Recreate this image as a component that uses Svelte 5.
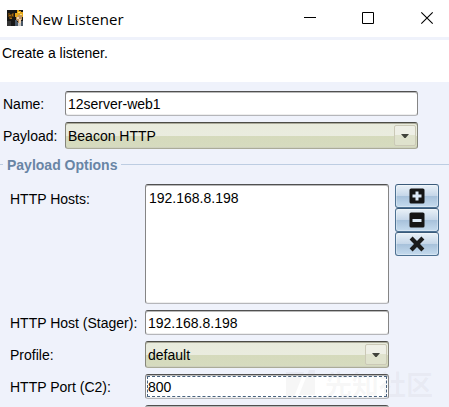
<script>
  let name = $state('12server-web1');
  let host = $state('192.168.8.198');
  let port = $state('800');
  const icons = ['plus', 'minus', 'cross'];
</script>

{#snippet combo(text)}
  <div class="combo">
    <span>{text}</span>
    <i><svg width="8" height="4" viewBox="0 0 8 4"><path d="M0 0H8L4.6 4H3.4Z" fill="#40423b" /></svg></i>
  </div>
{/snippet}

<div class="window">
  <header>
    <svg class="logo" width="16" height="16" viewBox="0 0 16 16" shape-rendering="crispEdges">
      <rect width="16" height="16" fill="#171716" />
      <path d="M1 3h2v1h2V3h2v4H5v2H2V7H1Z" fill="#5b3b0c" />
      <path d="M2 5h2v1H2zM5 4h1v2H5zM3 8h2v1H3z" fill="#a36a12" />
      <path d="M0 11h4v5H0z" fill="#343434" />
      <path d="M9 5h6v5h-1v5h-3v-4H9Z" fill="#bd9260" />
      <path d="M10 0h2v1h2v1h2v5h-1V5h-4v2H8V3h2Z" fill="#e4a51b" />
      <path d="M11 2h2v1h-2zM13 4h2v1h-2z" fill="#ffe36a" />
      <path d="M10 7h2v2h-2zM12 9h2v4h-2z" fill="#f1d3ae" />
      <path d="M8 10h2v2h1v4H8zM14 11h2v5h-2z" fill="#4a5968" />
      <path d="M11 13h3v3h-3z" fill="#c9c7c2" />
    </svg>
    <h1>New Listener</h1>
    <svg class="controls" width="132" height="14" viewBox="0 0 132 14" fill="none" stroke="#000">
      <path d="M1 6.5H13" /><path d="M59.5 1.5h11v11h-11z" />
      <path d="M118.3 1.3L129.7 12.7M129.7 1.3L118.3 12.7" stroke-width="1.1" />
    </svg>
  </header>
  <p class="intro">Create a listener.</p>

  <main>
    <div class="row top name"><label for="name">Name:</label><input id="name" bind:value={name} /></div>
    <div class="row top payload"><span class="label">Payload:</span>{@render combo('Beacon HTTP')}</div>
    <div class="legend"><b>Payload Options</b></div>
    <div class="row hosts">
      <span class="label">HTTP Hosts:</span>
      <div class="list">192.168.8.198</div>
      <div class="buttons">
        {#each icons as icon}
          <button aria-label={icon}>
            <svg width="16" height="16" viewBox="0 0 16 16">
              {#if icon === 'cross'}
                <path d="M3.6 0.6L8 5L12.4 0.6L15.4 3.6L11 8L15.4 12.4L12.4 15.4L8 11L3.6 15.4L0.6 12.4L5 8L0.6 3.6Z" fill="#1b1b1b" />
              {:else}
                <rect x="0.5" y="0.5" width="15" height="15" rx="1.6" fill="#151515" />
                <path d={icon === 'plus' ? 'M6.5 3.5h3v3h3v3h-3v3h-3v-3h-3v-3h3Z' : 'M3.5 7h9v3h-9Z'} fill="#dce9f6" />
              {/if}
            </svg>
          </button>
        {/each}
      </div>
    </div>
    <div class="row stager"><label for="host">HTTP Host (Stager):</label><input id="host" bind:value={host} /></div>
    <div class="row profile"><span class="label">Profile:</span>{@render combo('default')}</div>
    <div class="row port"><label for="port">HTTP Port (C2):</label><input id="port" class="focused" bind:value={port} /></div>
    <div class="row"><span class="label"></span><div class="next"></div></div>
  </main>

  <div class="mark">
    <svg width="30" height="28" viewBox="0 0 30 28"><path d="M0 2H18L8 27H0ZM23 0H29V25H13Z" fill="currentColor" /></svg>
    <span>先知社区</span>
  </div>
</div>

<style>
  .window {
    position: relative;
    width: 449px;
    height: 407px;
    overflow: hidden;
    background: #eff2fb;
    color: #000;
    font: 14px/16px "Liberation Sans", Arial, sans-serif;
  }
  * { box-sizing: border-box; }
  header {
    display: flex;
    align-items: center;
    height: 37px;
    padding-left: 7px;
    background: #fff;
  }
  .logo { margin-top: -1px; }
  h1 {
    margin: 0 0 0 8px;
    font: 400 15px/20px "Open Sans", "Noto Sans", sans-serif;
    letter-spacing: 0.1px;
    white-space: nowrap;
  }
  .controls { margin: -1px 14px 0 auto; }
  .intro {
    height: 42px;
    margin: 3px 0 0;
    padding: 5px 2px;
    background: #fff;
  }
  main { padding-top: 9px; }
  .row { display: flex; padding-left: 10px; }
  label, .label { flex: none; width: 135px; padding-top: 5px; white-space: nowrap; }
  .top { padding-left: 3px; }
  .top label, .top .label { width: 62px; }
  .top input, .top :global(.combo) { width: 353px; }
  .name { margin-bottom: 6px; }
  .hosts { margin-bottom: 6px; }
  .hosts .label { padding-top: 7px; }
  .stager { margin-bottom: 6px; }
  .profile { margin-bottom: 6px; }
  .payload .label, .profile .label { padding-top: 6px; }
  .port { margin-bottom: 6px; }
  input, .list, .next {
    width: 244px;
    height: 25px;
    margin: 0;
    padding: 0 2px;
    border: 1px solid #858585;
    border-top: 1px solid #505050;
    border-bottom-color: #b5b6ba;
    border-radius: 3px;
    outline: none;
    background: #fff;
    box-shadow: inset 0 1px #b9b9b9, inset 0 -1px #eee;
    font: inherit;
    color: inherit;
  }
  .focused { outline: 1px dashed #47627f; outline-offset: -3px; }
  .combo {
    display: flex;
    justify-content: space-between;
    width: 244px;
    height: 27px;
    padding: 2px 1px 2px 2px;
    border: 1px solid #85857a;
    border-top-color: #4b4b45;
    border-bottom-color: #aaab98;
    border-radius: 3px;
    background: linear-gradient(#e8ebdc 0, #eaecdf 13px, #d5dabc 13px, #d6dbbf 100%);
    box-shadow: inset 0 1px #aaa999, inset 0 -1px #cfd1bf;
  }
  .combo span { padding-top: 3px; }
  .combo i {
    display: flex;
    align-items: center;
    justify-content: center;
    width: 22px;
    height: 21px;
    border: 1px solid #cbc9b7;
    border-radius: 2px;
    background: linear-gradient(#eeefe6 50%, #dfe2cd 50%);
  }
  .legend {
    display: flex;
    align-items: center;
    gap: 4px;
    height: 31px;
    margin-bottom: 4px;
    color: #6985a5;
  }
  .legend::before, .legend::after { content: ''; width: 3px; height: 1px; background: #bdcde2; }
  .legend::after { flex: 1; }
  .list { height: 120px; padding: 5px 3px; }
  .buttons { display: flex; flex-direction: column; margin-left: 6px; }
  button {
    display: flex;
    align-items: center;
    justify-content: center;
    width: 44px;
    height: 24px;
    padding: 0;
    border: 1px solid #4d7192;
    border-top-color: #3a5a79;
    border-radius: 3px;
    background: linear-gradient(#eaf1f8, #c4d6e8 50%, #a6c0da 50%, #c5dbee);
    box-shadow: inset 0 0 0 1px #ffffff50;
  }
  .mark {
    position: absolute;
    left: 286px;
    top: 370px;
    display: flex;
    gap: 9px;
    color: #7f7f7f12;
    font: 700 27px/28px "Noto Sans CJK SC", sans-serif;
    pointer-events: none;
  }
</style>
